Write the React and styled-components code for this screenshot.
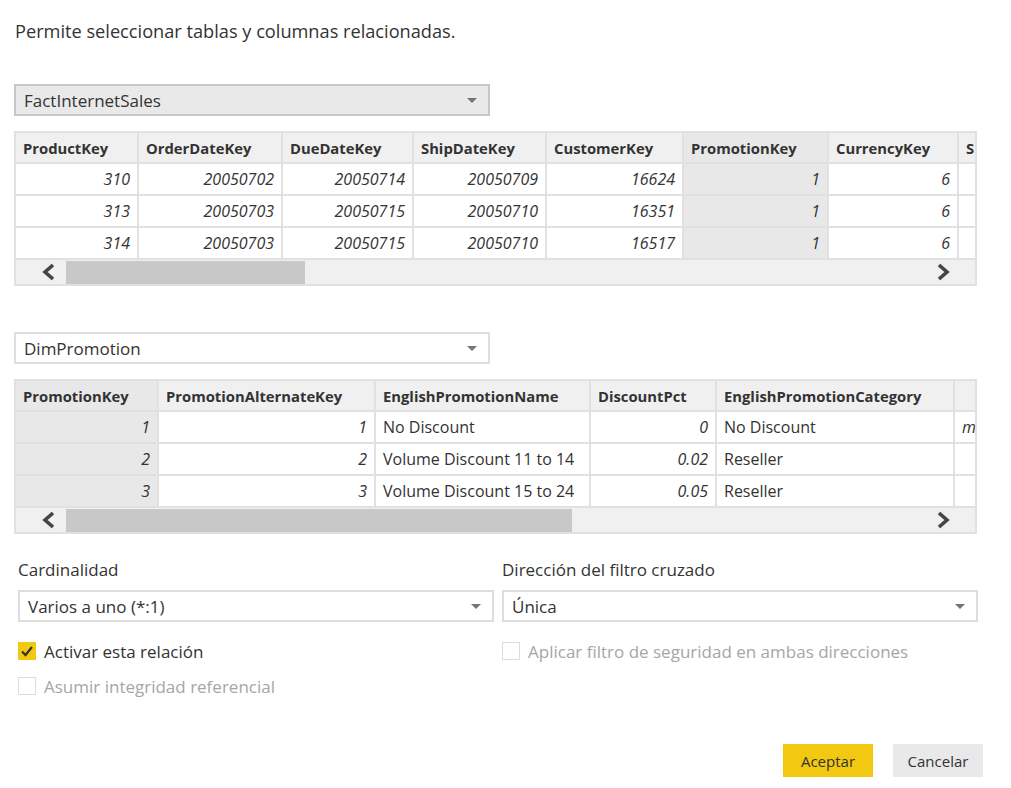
import styled, { createGlobalStyle } from "styled-components";

const GlobalStyle = createGlobalStyle`
  * { box-sizing: border-box; }
  body {
    margin: 0;
    background: #fff;
    color: #333;
    font-family: "Open Sans", "Noto Sans", sans-serif;
  }
`;

const factColumns = [
  { name: "ProductKey", width: 121 },
  { name: "OrderDateKey", width: 142 },
  { name: "DueDateKey", width: 129 },
  { name: "ShipDateKey", width: 131 },
  { name: "CustomerKey", width: 135 },
  { name: "PromotionKey", width: 143, selected: true },
  { name: "CurrencyKey", width: 128 },
  { name: "S", width: 16 },
];

const factRows = [
  ["310", "20050702", "20050714", "20050709", "16624", "1", "6", ""],
  ["313", "20050703", "20050715", "20050710", "16351", "1", "6", ""],
  ["314", "20050703", "20050715", "20050710", "16517", "1", "6", ""],
];

const promoColumns = [
  { name: "PromotionKey", width: 141, selected: true },
  { name: "PromotionAlternateKey", width: 215 },
  { name: "EnglishPromotionName", width: 213, text: true },
  { name: "DiscountPct", width: 124 },
  { name: "EnglishPromotionCategory", width: 236, text: true },
  { name: "", width: 20, text: true, italic: true },
];

const promoRows = [
  ["1", "1", "No Discount", "0", "No Discount", "m"],
  ["2", "2", "Volume Discount 11 to 14", "0.02", "Reseller", ""],
  ["3", "3", "Volume Discount 15 to 24", "0.05", "Reseller", ""],
];

const Chevron = ({ dir }) => (
  <svg width="14" height="18" viewBox="0 0 14 18">
    <polyline
      points={dir === "left" ? "11,2 3,9 11,16" : "3,2 11,9 3,16"}
      fill="none"
      stroke="#444"
      strokeWidth="3.6"
    />
  </svg>
);

const DataGrid = ({ columns, rows, thumb }) => (
  <GridFrame>
    <Table>
      <thead>
        <tr>
          {columns.map((col, i) => (
            <HeadCell key={i} $width={col.width} $selected={col.selected}>
              {col.name}
            </HeadCell>
          ))}
        </tr>
      </thead>
      <tbody>
        {rows.map((row, r) => (
          <tr key={r}>
            {row.map((value, c) => (
              <Cell
                key={c}
                $width={columns[c].width}
                $selected={columns[c].selected}
                $text={columns[c].text}
                $italic={columns[c].italic}
              >
                {value}
              </Cell>
            ))}
          </tr>
        ))}
      </tbody>
    </Table>
    <ScrollBar>
      <ScrollArrow $side="left">
        <Chevron dir="left" />
      </ScrollArrow>
      <Track>
        <Thumb style={{ width: thumb }} />
      </Track>
      <ScrollArrow $side="right">
        <Chevron dir="right" />
      </ScrollArrow>
    </ScrollBar>
  </GridFrame>
);

const Dropdown = ({ value, filled }) => (
  <Select $filled={filled}>
    <span>{value}</span>
    <Caret />
  </Select>
);

const CheckRow = ({ checked, disabled, children }) => (
  <CheckLine $disabled={disabled}>
    <Box $checked={checked}>
      {checked && (
        <svg width="14" height="14" viewBox="0 0 14 14">
          <polyline points="2,7.5 5.5,11 12,3" fill="none" stroke="#333" strokeWidth="2.2" />
        </svg>
      )}
    </Box>
    {children}
  </CheckLine>
);

const App = () => (
  <>
    <GlobalStyle />
    <Page>
      <Title>Permite seleccionar tablas y columnas relacionadas.</Title>

      <TableBlock $top={41}>
        <Dropdown value="FactInternetSales" filled />
        <DataGrid columns={factColumns} rows={factRows} thumb={239} />
      </TableBlock>

      <TableBlock $top={46}>
        <Dropdown value="DimPromotion" />
        <DataGrid columns={promoColumns} rows={promoRows} thumb={506} />
      </TableBlock>

      <Options>
        <OptionColumn>
          <FieldLabel>Cardinalidad</FieldLabel>
          <Dropdown value="Varios a uno (*:1)" />
          <Checks>
            <CheckRow checked>Activar esta relación</CheckRow>
            <CheckRow disabled>Asumir integridad referencial</CheckRow>
          </Checks>
        </OptionColumn>
        <OptionColumn>
          <FieldLabel>Dirección del filtro cruzado</FieldLabel>
          <Dropdown value="Única" />
          <Checks>
            <CheckRow disabled>Aplicar filtro de seguridad en ambas direcciones</CheckRow>
          </Checks>
        </OptionColumn>
      </Options>

      <Footer>
        <Button $primary>Aceptar</Button>
        <Button>Cancelar</Button>
      </Footer>
    </Page>
  </>
);

const Page = styled.div`
  width: 1011px;
  padding: 19px 28px 0 14px;
`;

const Title = styled.p`
  margin: 0 0 0 1px;
  font-size: 18.2px;
  line-height: 24px;
  color: #333;
`;

const TableBlock = styled.section`
  display: flex;
  flex-direction: column;
  gap: 15px;
  margin-top: ${(p) => p.$top}px;
  width: 963px;
`;

const Select = styled.div`
  display: flex;
  align-items: center;
  justify-content: space-between;
  width: 476px;
  height: 32px;
  padding: 0 11px 0 8px;
  border: 2px solid ${(p) => (p.$filled ? "#c8c8c8" : "#dedede")};
  background: ${(p) => (p.$filled ? "#e9e9e9" : "#fff")};
  font-size: 17px;
  color: #333;
`;

const Caret = styled.span`
  width: 0;
  height: 0;
  border-left: 5px solid transparent;
  border-right: 5px solid transparent;
  border-top: 5px solid #767676;
`;

const GridFrame = styled.div`
  border: 2px solid #e1e1e1;
  overflow: hidden;
  background: #e1e1e1;
`;

const Table = styled.table`
  border-collapse: separate;
  border-spacing: 2px;
  margin: -2px 0 0 -2px;
  table-layout: fixed;
`;

const HeadCell = styled.th`
  width: ${(p) => p.$width}px;
  min-width: ${(p) => p.$width}px;
  max-width: ${(p) => p.$width}px;
  height: 29px;
  padding: 0 7px;
  background: ${(p) => (p.$selected ? "#e8e8e8" : "#f0f0f0")};
  font-size: 14.8px;
  font-weight: 700;
  text-align: left;
  white-space: nowrap;
  overflow: hidden;
  color: #333;
`;

const Cell = styled.td`
  width: ${(p) => p.$width}px;
  min-width: ${(p) => p.$width}px;
  max-width: ${(p) => p.$width}px;
  height: 30px;
  padding: 0 7px;
  background: ${(p) => (p.$selected ? "#e8e8e8" : "#fff")};
  font-size: 16px;
  font-style: ${(p) => (p.$text && !p.$italic ? "normal" : "italic")};
  text-align: ${(p) => (p.$text ? "left" : "right")};
  white-space: nowrap;
  overflow: hidden;
  color: #333;
`;

const ScrollBar = styled.div`
  display: flex;
  height: 24px;
  background: #f0f0f0;
`;

const ScrollArrow = styled.div`
  display: flex;
  align-items: center;
  width: 50px;
  justify-content: ${(p) => (p.$side === "left" ? "flex-end" : "flex-start")};
  padding: ${(p) => (p.$side === "left" ? "0 10px 0 0" : "0 0 0 11px")};
`;

const Track = styled.div`
  flex: 1;
  display: flex;
  padding: 1px 0 0;
`;

const Thumb = styled.div`
  background: #c8c8c8;
  height: 23px;
`;

const Options = styled.div`
  display: grid;
  grid-template-columns: 476px 476px;
  column-gap: 8px;
  margin: 25px 0 0 4px;
`;

const OptionColumn = styled.div`
  display: flex;
  flex-direction: column;
`;

const FieldLabel = styled.div`
  font-size: 17px;
  line-height: 22px;
  margin-bottom: 9px;
  color: #333;
`;

const Checks = styled.div`
  display: flex;
  flex-direction: column;
  gap: 13px;
  margin-top: 18px;
`;

const CheckLine = styled.label`
  display: flex;
  align-items: center;
  gap: 8px;
  height: 22px;
  font-size: 17px;
  color: ${(p) => (p.$disabled ? "#a6a6a6" : "#333")};
`;

const Box = styled.span`
  display: flex;
  align-items: center;
  justify-content: center;
  width: 18px;
  height: 18px;
  background: ${(p) => (p.$checked ? "#f2c811" : "#fff")};
  border: ${(p) => (p.$checked ? "none" : "1px solid #dcdcdc")};
`;

const Footer = styled.div`
  display: flex;
  justify-content: flex-end;
  gap: 20px;
  margin-top: 47px;
`;

const Button = styled.button`
  width: 90px;
  height: 33px;
  border: none;
  background: ${(p) => (p.$primary ? "#f2c811" : "#e9e9e9")};
  font-family: inherit;
  font-size: 15px;
  color: #333;
`;

export default App;
